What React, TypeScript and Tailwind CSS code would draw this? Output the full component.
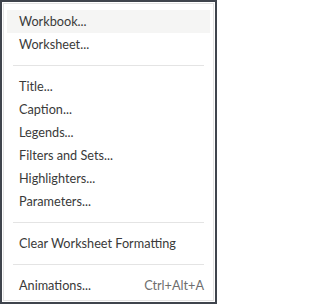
const font = { fontFamily: "Lato, 'Noto Sans', sans-serif" };

type Item = { label: string; shortcut?: string; active?: boolean } | "sep";

const items: Item[] = [
  { label: "Workbook...", active: true },
  { label: "Worksheet..." },
  "sep",
  { label: "Title..." },
  { label: "Caption..." },
  { label: "Legends..." },
  { label: "Filters and Sets..." },
  { label: "Highlighters..." },
  { label: "Parameters..." },
  "sep",
  { label: "Clear Worksheet Formatting" },
  "sep",
  { label: "Animations...", shortcut: "Ctrl+Alt+A" },
];

export default function App() {
  return (
    <div className="h-[304px] w-[217px] border-2 border-[#3f444d] bg-white p-px" style={font}>
      <div className="flex h-full flex-col border border-[#e3e3e3] px-[3px] pt-[6px]">
        {items.map((it, i) =>
          it === "sep" ? (
            <div key={i} className="flex h-[19px] items-center px-[6px]">
              <div className="h-px w-full bg-[#e4e4e4]" />
            </div>
          ) : (
            <div
              key={i}
              className={`flex h-[23px] items-center justify-between pl-[12px] pr-[6px] text-[12.7px] text-[#3a3a3a] ${
                it.active ? "bg-[#f5f5f4]" : ""
              }`}
            >
              <span>{it.label}</span>
              {it.shortcut && <span className="text-[#6e6e6e]">{it.shortcut}</span>}
            </div>
          )
        )}
      </div>
    </div>
  );
}
